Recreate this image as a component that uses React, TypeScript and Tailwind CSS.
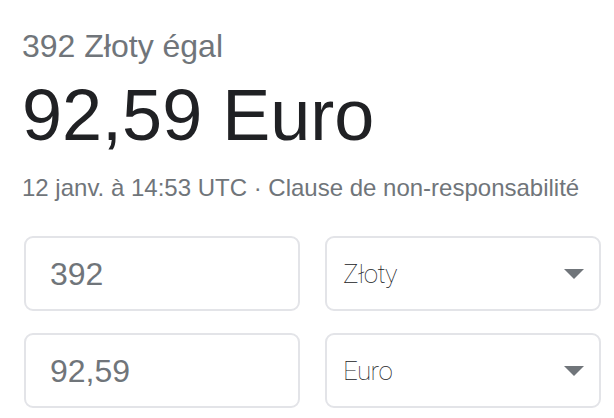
import React from "react";

const arial = { fontFamily: '"Liberation Sans", Arial, sans-serif' };

function AmountBox({ value }: { value: string }) {
  return (
    <div className="flex h-[75px] w-[276px] shrink-0 items-center rounded-[9px] border-2 border-[#e3e4e8] bg-white pl-[24px]">
      <span className="text-[32px] leading-none text-[#70757a]">{value}</span>
    </div>
  );
}

function CurrencySelect({ label }: { label: string }) {
  return (
    <div className="flex h-[75px] w-[276px] shrink-0 items-center justify-between rounded-[9px] border-2 border-[#e3e4e8] bg-white pl-[16px] pr-[15px]">
      <span className="font-['Roboto',sans-serif] text-[26px] font-thin leading-none tracking-[-0.6px] text-[#202124]">
        {label}
      </span>
      <svg width="20" height="10" viewBox="0 0 20 10">
        <path d="M0 0 L20 0 L10 10 Z" fill="#70757a" />
      </svg>
    </div>
  );
}

export default function App() {
  return (
    <div className="min-h-[418px] w-[614px] bg-white pl-[22px] pt-[26px]" style={arial}>
      <div className="text-[32px] leading-[40px] text-[#70757a]">392 Złoty égal</div>
      <div className="mt-[9px] text-[72px] leading-[80px] text-[#202124]">92,59 Euro</div>
      <div className="mt-[17px] text-[24px] leading-[32px] text-[#70757a]">
        12 janv. à 14:53 UTC · Clause de non-responsabilité
      </div>
      <div className="mt-[32px] flex flex-col gap-[22px] pl-[2px]">
        <div className="flex gap-[25px]">
          <AmountBox value="392" />
          <CurrencySelect label="Złoty" />
        </div>
        <div className="flex gap-[25px]">
          <AmountBox value="92,59" />
          <CurrencySelect label="Euro" />
        </div>
      </div>
    </div>
  );
}
